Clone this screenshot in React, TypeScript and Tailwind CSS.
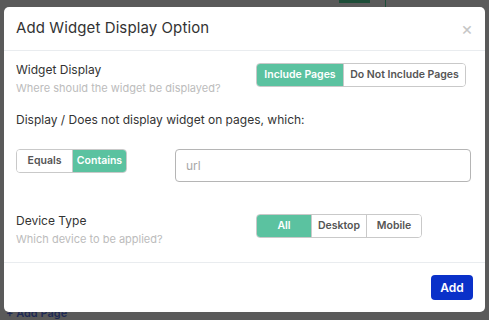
import { useState } from "react";

const GREEN = "bg-[#5bc2a0] text-white";
const IDLE = "bg-white text-[#555]";

function Segmented({
  options,
  value,
  onChange,
  widths,
}: {
  options: string[];
  value: string;
  onChange: (v: string) => void;
  widths: string[];
}) {
  return (
    <div className="flex h-[24px] rounded-[4px] border border-[#c9c9c9] overflow-hidden">
      {options.map((o, i) => (
        <button
          key={o}
          onClick={() => onChange(o)}
          className={`${widths[i]} flex items-center justify-center whitespace-nowrap text-[10.5px] font-semibold ${
            value === o ? GREEN : IDLE
          } ${i > 0 ? "border-l border-[#c9c9c9]" : ""}`}
        >
          {o}
        </button>
      ))}
    </div>
  );
}

export default function App() {
  const [display, setDisplay] = useState("Include Pages");
  const [match, setMatch] = useState("Contains");
  const [device, setDevice] = useState("All");
  const [url, setUrl] = useState("");

  return (
    <div
      className="relative w-[489px] h-[320px] overflow-hidden bg-[#5a5a5a] pt-[7px] px-[4px]"
      style={{ fontFamily: "Inter, 'Noto Sans', sans-serif" }}
    >
      {/* page behind the overlay */}
      <div className="absolute left-[339px] top-0 w-[31px] h-[3px] bg-[#1d4d38]" />
      <div className="absolute left-[385px] top-0 w-[1px] h-[7px] bg-[#1d4d38]" />
      <div className="absolute left-[6px] top-[307px] text-[11px] leading-[12px] font-semibold text-[#1e2a55]">
        + Add Page
      </div>

      <div className="relative flex flex-col h-[305px] bg-white rounded-[5px]">
        <header className="flex items-center justify-between h-[44px] px-[12px] border-b border-[#e9ecef]">
          <h1 className="text-[15px] tracking-[0.1px] text-[#333]">Add Widget Display Option</h1>
          <button className="text-[18px] leading-none text-[#c6c6c6]">×</button>
        </header>

        <div className="flex-1 px-[12px] pt-[10px]">
          <div className="flex items-start">
            <div className="w-[240px]">
              <p className="text-[12px] leading-[18px] text-[#333]">Widget Display</p>
              <p className="text-[11px] leading-[18px] text-[#bcbcbc]">Where should the widget be displayed?</p>
            </div>
            <div className="mt-[2px]">
              <Segmented
                options={["Include Pages", "Do Not Include Pages"]}
                value={display}
                onChange={setDisplay}
                widths={["w-[86px]", "w-[122px]"]}
              />
            </div>
          </div>

          <p className="mt-[14px] text-[12px] leading-[18px] text-[#333]">
            Display / Does not display widget on pages, which:
          </p>

          <div className="mt-[20px] flex items-start">
            <Segmented
              options={["Equals", "Contains"]}
              value={match}
              onChange={setMatch}
              widths={["w-[55px]", "w-[54px]"]}
            />
            <input
              value={url}
              onChange={(e) => setUrl(e.target.value)}
              placeholder="url"
              className="ml-[48px] w-[296px] h-[33px] rounded-[4px] border border-[#b5b5b5] px-[10px] text-[12px] text-[#333] placeholder:text-[#a8a8a8] outline-none"
            />
          </div>

          <div className="mt-[30px] flex items-start">
            <div className="w-[240px]">
              <p className="text-[12px] leading-[18px] text-[#333]">Device Type</p>
              <p className="text-[11px] leading-[18px] text-[#bcbcbc]">Which device to be applied?</p>
            </div>
            <div className="mt-[2px]">
              <Segmented
                options={["All", "Desktop", "Mobile"]}
                value={device}
                onChange={setDevice}
                widths={["w-[54px]", "w-[55px]", "w-[55px]"]}
              />
            </div>
          </div>
        </div>

        <footer className="flex items-center justify-end h-[50px] px-[12px] border-t border-[#e9ecef]">
          <button className="h-[25px] w-[42px] rounded-[4px] bg-[#0a31c9] text-white text-[12px] font-semibold">
            Add
          </button>
        </footer>
      </div>
    </div>
  );
}
